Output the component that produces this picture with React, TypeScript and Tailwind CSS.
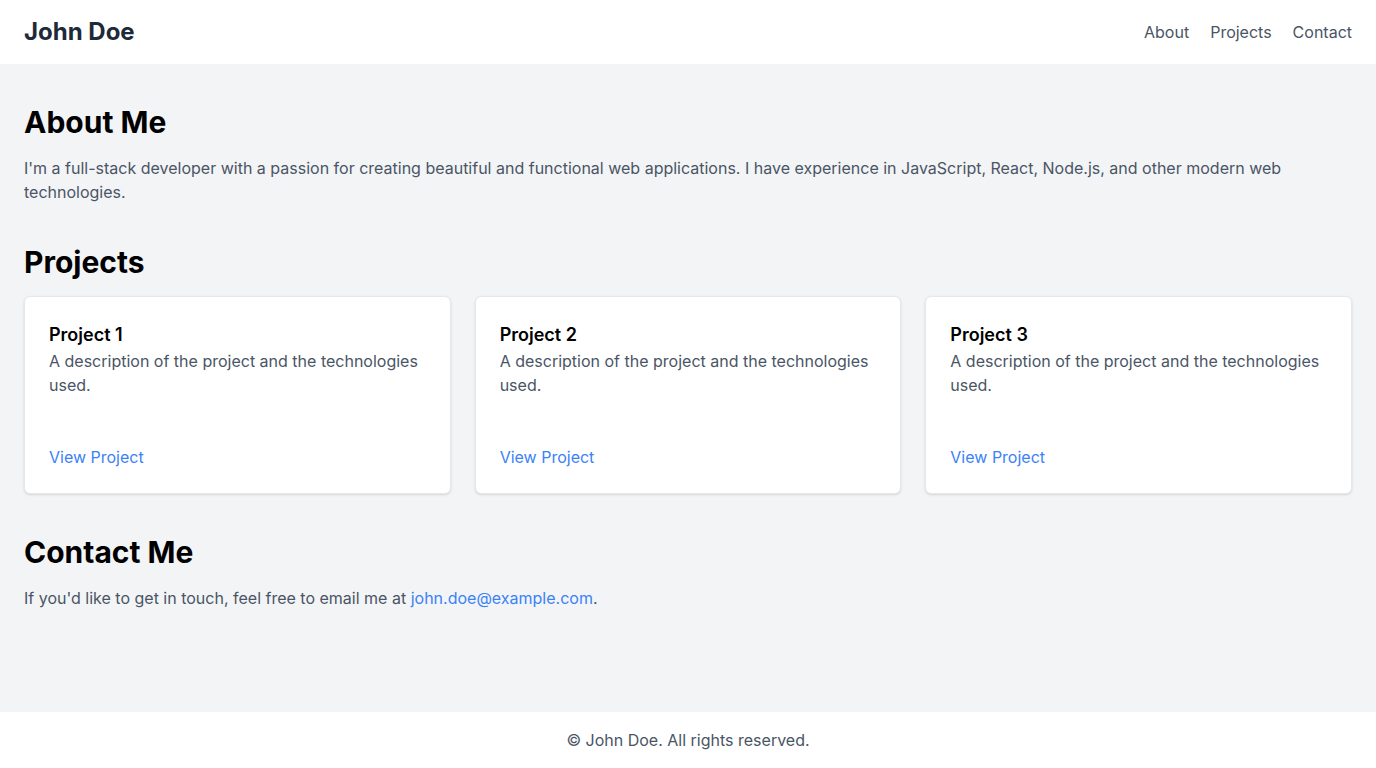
export default function App() {
  const projects = [1, 2, 3];

  return (
    <div className="min-h-screen flex flex-col bg-gray-100 font-['Inter',sans-serif]">
      <header className="bg-white flex items-center justify-between px-6 py-4">
        <h1 className="text-2xl font-bold text-gray-800">John Doe</h1>
        <nav className="flex gap-[21px] text-base text-gray-600">
          <a href="#about">About</a>
          <a href="#projects">Projects</a>
          <a href="#contact">Contact</a>
        </nav>
      </header>

      <main className="flex-1 px-6 pt-10">
        <section id="about" className="mb-10">
          <h2 className="text-3xl font-bold text-black mb-4">About Me</h2>
          <p className="text-base text-gray-600">
            I'm a full-stack developer with a passion for creating beautiful and functional web applications. I have experience in JavaScript, React, Node.js, and other modern web technologies.
          </p>
        </section>

        <section id="projects" className="mb-10">
          <h2 className="text-3xl font-bold text-black mb-4">Projects</h2>
          <div className="grid grid-cols-3 gap-6">
            {projects.map((n) => (
              <div key={n} className="bg-white rounded-md border border-gray-200 shadow-sm p-6 flex flex-col">
                <h3 className="text-lg font-semibold text-black">Project {n}</h3>
                <p className="text-base text-gray-600">A description of the project and the technologies used.</p>
                <a href="#" className="mt-12 text-[#3b82f6]">View Project</a>
              </div>
            ))}
          </div>
        </section>

        <section id="contact">
          <h2 className="text-3xl font-bold text-black mb-4">Contact Me</h2>
          <p className="text-base text-gray-600">
            If you'd like to get in touch, feel free to email me at{" "}
            <a href="mailto:john.doe@example.com" className="text-[#3b82f6]">john.doe@example.com</a>.
          </p>
        </section>
      </main>

      <footer className="bg-white py-4 text-center text-gray-600">
        © John Doe. All rights reserved.
      </footer>
    </div>
  );
}
